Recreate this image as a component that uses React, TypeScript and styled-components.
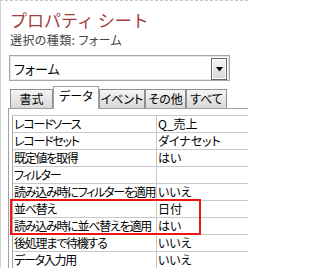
import styled, { createGlobalStyle } from "styled-components";

const GlobalStyle = createGlobalStyle`
  html, body {
    margin: 0;
    padding: 0;
    background: #ffffff;
  }
  body {
    font-family: "Noto Sans CJK JP", "Noto Sans", sans-serif;
    font-feature-settings: "palt";
    color: #000;
  }
`;

const Frame = styled.div`
  width: 248px;
  height: 268px;
  box-sizing: border-box;
  overflow: hidden;
  border-top: 1px dashed #c8c8c8;
  border-left: 1px solid #d2d2d2;
  padding-left: 7px;
  display: flex;
  flex-direction: column;
  background: #fff;
`;

const Title = styled.div`
  margin: 9px 0 0 2px;
  font-size: 17px;
  line-height: 20px;
  font-feature-settings: normal;
  color: #a43b3b;
  white-space: nowrap;
`;

const Subtitle = styled.div`
  margin: 2px 0 0 2px;
  font-size: 12px;
  line-height: 16px;
  letter-spacing: 0.4px;
  color: #454545;
  white-space: nowrap;
`;

const Combo = styled.div`
  margin: 7px 0 0 1px;
  width: 221px;
  height: 28px;
  box-sizing: border-box;
  border: 1px solid #a6a6a6;
  box-shadow: inset 0 0 0 1px #e6e6e6;
  display: flex;
  align-items: center;
  justify-content: space-between;
  padding: 2px 2px 0 4px;
`;

const ComboText = styled.span`
  font-size: 13px;
  line-height: 16px;
`;

const DropButton = styled.div`
  width: 16px;
  height: 22px;
  box-sizing: border-box;
  border: 1px solid #666;
  box-shadow: inset 0 0 0 1px #fff;
  background: linear-gradient(#f7f7f7, #d6d6d6);
  display: flex;
  align-items: center;
  justify-content: center;
`;

const TabRow = styled.div`
  margin: 5px 0 0 2px;
  height: 22px;
  display: flex;
  align-items: flex-end;
  position: relative;
  z-index: 1;
`;

const Tab = styled.div<{ $w: number; $active?: boolean }>`
  width: ${(p) => p.$w}px;
  height: ${(p) => (p.$active ? 23 : 19)}px;
  margin-bottom: ${(p) => (p.$active ? -1 : 0)}px;
  box-sizing: border-box;
  border: 1px solid ${(p) => (p.$active ? "#a0a0a0" : "#8e8e8e")};
  border-bottom: none;
  background: ${(p) => (p.$active ? "#fff" : "linear-gradient(#f4f4f4, #d8d8d8)")};
  font-size: 12px;
  line-height: ${(p) => (p.$active ? 18 : 17)}px;
  text-align: center;
  white-space: nowrap;
`;

const Panel = styled.div`
  flex: 1;
  border-top: 1px solid #a0a0a0;
  border-left: 1px solid #a0a0a0;
  padding: 6px 0 0 3px;
`;

const Grid = styled.div`
  position: relative;
  border-top: 1px solid #c8c8c8;
  border-left: 1px solid #a8a8a8;
`;

const Row = styled.div`
  display: flex;
  height: 17px;
  box-sizing: border-box;
  border-bottom: 1px solid #c8c8c8;
  font-size: 12px;
  line-height: 16px;
`;

const Label = styled.div`
  width: 143px;
  flex-shrink: 0;
  padding-left: 1px;
  box-sizing: border-box;
  overflow: hidden;
  white-space: nowrap;
  letter-spacing: -1.25px;
`;

const Value = styled.div`
  flex: 1;
  border-left: 1px solid #c8c8c8;
  padding-left: 1px;
  white-space: nowrap;
`;

const Highlight = styled.div`
  position: absolute;
  left: -3px;
  top: 83px;
  width: 191px;
  height: 36px;
  box-sizing: border-box;
  border: 2px solid #ef1515;
  pointer-events: none;
`;

const tabs = [
  { name: "書式", w: 43 },
  { name: "データ", w: 46, active: true },
  { name: "イベント", w: 46 },
  { name: "その他", w: 41 },
  { name: "すべて", w: 41 },
];

const rows = [
  ["レコードソース", "Q_売上"],
  ["レコードセット", "ダイナセット"],
  ["既定値を取得", "はい"],
  ["フィルター", ""],
  ["読み込み時にフィルターを適用", "いいえ"],
  ["並べ替え", "日付"],
  ["読み込み時に並べ替えを適用", "はい"],
  ["後処理まで待機する", "いいえ"],
  ["データ入力用", "いいえ"],
];

export default function App() {
  return (
    <>
      <GlobalStyle />
      <Frame>
        <Title>プロパティ シート</Title>
        <Subtitle>選択の種類: フォーム</Subtitle>
        <Combo>
          <ComboText>フォーム</ComboText>
          <DropButton>
            <svg width="7" height="5" viewBox="0 0 7 5">
              <path d="M0 0H7L3.5 4.5Z" fill="#000" />
            </svg>
          </DropButton>
        </Combo>
        <TabRow>
          {tabs.map((t) => (
            <Tab key={t.name} $w={t.w} $active={t.active}>
              {t.name}
            </Tab>
          ))}
        </TabRow>
        <Panel>
          <Grid>
            {rows.map(([label, value]) => (
              <Row key={label}>
                <Label>{label}</Label>
                <Value>{value}</Value>
              </Row>
            ))}
            <Highlight />
          </Grid>
        </Panel>
      </Frame>
    </>
  );
}
